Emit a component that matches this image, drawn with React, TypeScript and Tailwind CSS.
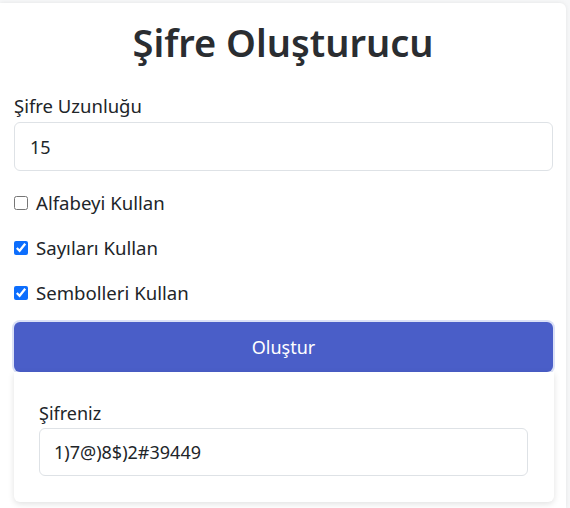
import { useState } from "react";

const font = { fontFamily: '"Noto Sans", "Open Sans", sans-serif' };

export default function App() {
  const [length, setLength] = useState("15");
  const [alpha, setAlpha] = useState(false);
  const [nums, setNums] = useState(true);
  const [syms, setSyms] = useState(true);

  const options = [
    { label: "Alfabeyi Kullan", checked: alpha, set: setAlpha },
    { label: "Sayıları Kullan", checked: nums, set: setNums },
    { label: "Sembolleri Kullan", checked: syms, set: setSyms },
  ];

  return (
    <div className="min-h-[508px] bg-[#f6f7f8] pt-[3px] pr-[4px] text-[#212529]" style={font}>
      <div className="min-h-[505px] rounded-tr-md bg-white px-[14px] shadow-[0_0_4px_rgba(0,0,0,0.08)]">
        <h1 className="pt-[13px] text-center text-[38px] font-semibold leading-[52px] text-[#2a2d31]">
          Şifre Oluşturucu
        </h1>

        <label className="mt-[26px] block text-[18.5px] leading-[24px]">Şifre Uzunluğu</label>
        <input
          value={length}
          onChange={(e) => setLength(e.target.value)}
          className="mt-[4px] block h-[49px] w-[539px] rounded-md border border-[#dee2e6] px-[15px] text-[18px] outline-none"
        />

        <div className="mt-[9px] flex flex-col">
          {options.map((o) => (
            <label key={o.label} className="flex h-[45px] items-center gap-[8px] text-[18.6px]">
              <input
                type="checkbox"
                checked={o.checked}
                onChange={(e) => o.set(e.target.checked)}
                className="m-0 h-[14px] w-[14px] accent-[#0d6efd]"
              />
              {o.label}
            </label>
          ))}
        </div>

        <button className="mt-[7px] block h-[50px] w-[539px] rounded-md bg-[#4a5ec8] text-[18px] text-white ring-2 ring-[#dbe1f7]">
          Oluştur
        </button>

        <div className="w-[540px] rounded-b-md bg-white px-[25px] pt-[29px] pb-[26px] shadow-[0_2px_6px_rgba(0,0,0,0.12)]">
          <label className="block text-[18px] leading-[24px]">Şifreniz</label>
          <input
            readOnly
            value="1)7@)8$)2#39449"
            className="mt-[3px] block h-[48px] w-[489px] rounded-md border border-[#dee2e6] px-[14px] text-[18px] outline-none"
          />
        </div>
      </div>
    </div>
  );
}
